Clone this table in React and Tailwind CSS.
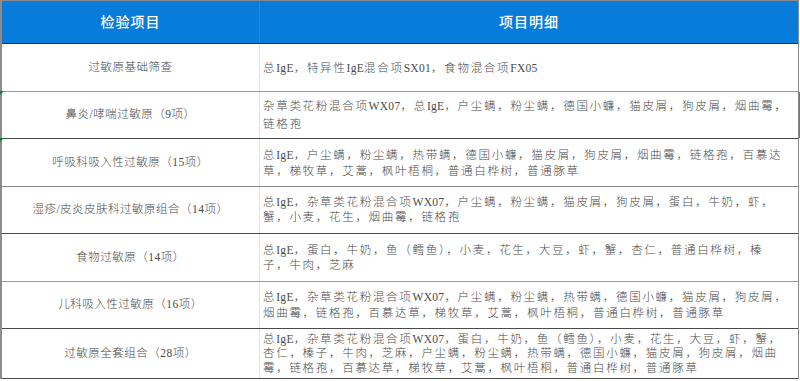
import React from "react";

const rows = [
  { name: "过敏原基础筛查", h: "h-[48px]", b: "border-[#9a9a9a]", lh: "leading-[16px]", lines: ["总IgE，特异性IgE混合项SX01，食物混合项FX05"] },
  { name: "鼻炎/哮喘过敏原（9项）", h: "h-[47px]", b: "border-[#4a4a4a]", lh: "leading-[18px]", green: true, lines: ["杂草类花粉混合项WX07，总IgE，户尘螨，粉尘螨，德国小蠊，猫皮屑，狗皮屑，烟曲霉，", "链格孢"] },
  { name: "呼吸科吸入性过敏原（15项）", h: "h-[48px]", b: "border-[#8a8a8a]", lh: "leading-[16px]", lines: ["总IgE，户尘螨，粉尘螨，热带螨，德国小蠊，猫皮屑，狗皮屑，烟曲霉，链格孢，百慕达", "草，梯牧草，艾蒿，枫叶梧桐，普通白桦树，普通豚草"] },
  { name: "湿疹/皮炎皮肤科过敏原组合（14项）", h: "h-[47px]", b: "border-[#4a4a4a]", lh: "leading-[15px]", lines: ["总IgE，杂草类花粉混合项WX07，户尘螨，粉尘螨，猫皮屑，狗皮屑，蛋白，牛奶，虾，", "蟹，小麦，花生，烟曲霉，链格孢"] },
  { name: "食物过敏原（14项）", h: "h-[48px]", b: "border-[#9a9a9a]", lh: "leading-[15px]", lines: ["总IgE，蛋白，牛奶，鱼（鳕鱼），小麦，花生，大豆，虾，蟹，杏仁，普通白桦树，榛", "子，牛肉，芝麻"] },
  { name: "儿科吸入性过敏原（16项）", h: "h-[47px]", b: "border-[#4a4a4a]", lh: "leading-[16px]", lines: ["总IgE，杂草类花粉混合项WX07，户尘螨，粉尘螨，热带螨，德国小蠊，猫皮屑，狗皮屑，", "烟曲霉，链格孢，百慕达草，梯牧草，艾蒿，枫叶梧桐，普通白桦树，普通豚草"] },
  { name: "过敏原全套组合（28项）", h: "h-[50px]", b: "border-[#4a4a4a]", lh: "leading-[14.5px]", lines: ["总IgE，杂草类花粉混合项WX07，蛋白，牛奶，鱼（鳕鱼），小麦，花生，大豆，虾，蟹，", "杏仁，榛子，牛肉，芝麻，户尘螨，粉尘螨，热带螨，德国小蠊，猫皮屑，狗皮屑，烟曲", "霉，链格孢，百慕达草，梯牧草，艾蒿，枫叶梧桐，普通白桦树，普通豚草"] },
];

const font = { fontFamily: '"Liberation Serif", "Noto Sans CJK SC", serif' };

function Line({ text }) {
  const parts = text.split(/([A-Za-z0-9]+)/).filter(Boolean);
  return (
    <div className="whitespace-nowrap">
      {parts.map((p, k) =>
        /^[A-Za-z0-9]+$/.test(p) ? (
          <span key={k} className="tracking-[0.3px]">{p}</span>
        ) : (
          <span key={k}>{p}</span>
        )
      )}
    </div>
  );
}

export default function App() {
  return (
    <div className="w-[800px] h-[381px] bg-white overflow-hidden" style={font}>
      <div className="relative w-[799px] border-t border-t-[#8a8a8a] border-l-2 border-l-[#8c8c8c] border-r border-r-[#8c8c8c]">
        <div className="grid grid-cols-[258px_1fr] h-[43px] bg-[#087cdb] border-b border-b-[#1c2b3e] text-white text-[14px] tracking-[1px] font-medium">
          <div className="flex items-center justify-center border-r border-r-[#2a86d6]">检验项目</div>
          <div className="flex items-center justify-center">项目明细</div>
        </div>
        {rows.map((r, i) => (
          <div key={i} className={`relative grid grid-cols-[258px_1fr] ${r.h} border-b ${r.b}`}>
            <div className="flex items-center justify-center border-r border-r-[#e2e2e2] text-[11.5px] tracking-[0.5px] text-[#4a4a4a] font-light">
              {r.name}
            </div>
            <div className={`flex flex-col justify-center pl-[3px] text-[11.5px] tracking-[1.7px] text-[#4a4a4a] font-light ${r.lh}`}>
              {r.lines.map((l, j) => (
                <Line key={j} text={l} />
              ))}
            </div>
            {r.green && (
              <div className="absolute right-[-2px] top-0 bottom-0 w-[1px] bg-[#21a366]" />
            )}
            {(i === 1 || i === 2) && (
              <div className="absolute left-[-2px] top-[-1px] w-0 h-0 border-t-[4px] border-t-[#1e7a3a] border-r-[4px] border-r-transparent" />
            )}
          </div>
        ))}
      </div>
    </div>
  );
}
